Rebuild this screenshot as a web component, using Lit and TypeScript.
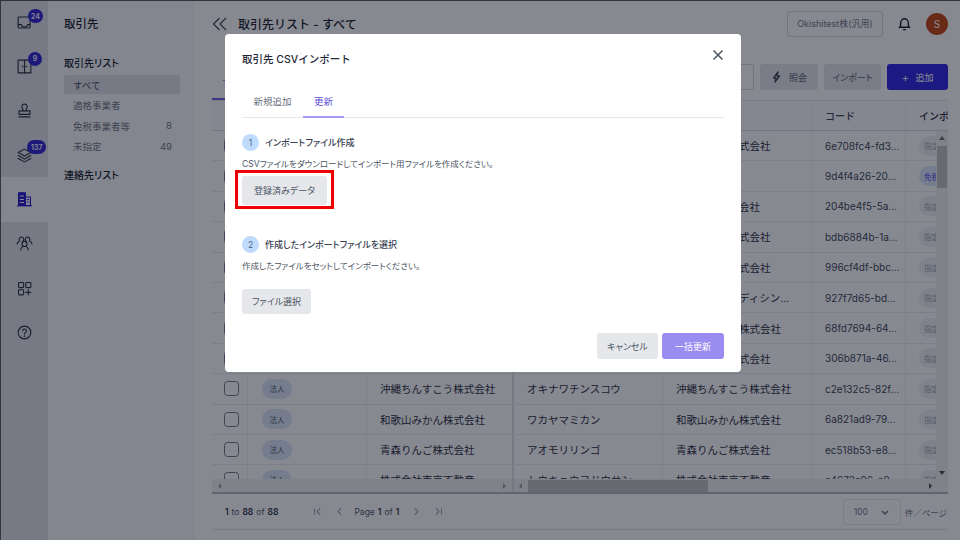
import { LitElement, html, css, svg } from "lit";
import { customElement } from "lit/decorators.js";

const rows: [string, string, string, string, boolean?][] = [
  ["熊本すいか株式会社", "クマモトスイカ", "熊本すいか株式会社", "6e708fc4-fd3..."],
  ["山田太郎", "ヤマダタロウ", "山田太郎", "9d4f4a26-20...", true],
  ["北海道メロン会社", "ホッカイドウメロン", "北海道メロン会社", "204be4f5-5a..."],
  ["長野ぶどう株式会社", "ナガノブドウ", "長野ぶどう株式会社", "bdb6884b-1a..."],
  ["静岡おちゃ株式会社", "シズオカオチャ", "静岡おちゃ株式会社", "996cf4df-bbc..."],
  ["株式会社東メディシン", "トウメディシン", "株式会社東メディシン...", "927f7d65-bd..."],
  ["鹿児島さつま株式会社", "カゴシマサツマ", "鹿児島さつま株式会社", "68fd7694-64..."],
  ["栃木いちご株式会社", "トチギイチゴ", "栃木いちご株式会社", "306b871a-46..."],
  ["沖縄ちんすこう株式会社", "オキナワチンスコウ", "沖縄ちんすこう株式会社", "c2e132c5-82f..."],
  ["和歌山みかん株式会社", "ワカヤマミカン", "和歌山みかん株式会社", "6a821ad9-79..."],
  ["青森りんご株式会社", "アオモリリンゴ", "青森りんご株式会社", "ec518b53-e8..."],
  ["株式会社東京不動産", "トウキョウフドウサン", "株式会社東京不動産", "a4673a96-e9..."],
];

const rail = [
  { badge: "24", icon: svg`<path d="M16.500 12.500V3.500h-13a1 1 0 0 0-1 1v11a1 1 0 0 0 1 1h12a1 1 0 0 0 1-1z"/><path d="M2.500 12.500h4a3.500 2.500 0 0 0 7 0h3"/>` },
  { badge: "9", icon: svg`<rect x="2.500" y="2.500" width="15" height="15"/><path d="M10 2.500v15"/><path d="M7.800 10h.01M12.200 10h.01" stroke-width="2"/>` },
  { icon: svg`<path d="M8 10.500V8.200A3.200 3.200 0 1 1 12 8.200V10.500"/><path d="M3.500 10.500h13v4h-13zM3.500 17.500h13"/>` },
  { badge: "137", icon: svg`<path d="M10 2.500 17.500 6.500 10 10.500 2.500 6.500z"/><path d="M2.500 10 10 14 17.500 10"/><path d="M2.500 13.500 10 17.500 17.500 13.500"/>` },
  { active: true, icon: svg`<rect x="3" y="2" width="8" height="15" fill="#1e12c8" stroke="#1e12c8"/><rect x="11" y="7" width="6" height="10" stroke="#1e12c8"/><path d="M5 6h4M5 10h4M5 13.500h4" stroke="#fff" stroke-width="1.200"/><path d="M13 10h2M13 13h2M1.500 17.500h17" stroke="#1e12c8" stroke-width="1"/>` },
  { icon: svg`<circle cx="10" cy="10.500" r="3"/><path d="M5.500 17.500c.4-2.600 1.800-3.700 2.800-4.300M14.500 17.500c-.4-2.600-1.800-3.700-2.800-4.300"/><path d="M7.600 7.600A2.700 2.700 0 1 0 4 6.400M12.400 7.600A2.700 2.700 0 1 1 16 6.400"/><path d="M1.200 10.500c.3-1.500 1.200-2.600 2.800-3.100M18.800 10.500c-.3-1.500-1.200-2.600-2.800-3.100"/>` },
  { icon: svg`<rect x="3" y="3" width="6" height="6" rx="1"/><rect x="11.500" y="3" width="6" height="6" rx="1"/><rect x="3" y="11.500" width="6" height="6" rx="1"/><path d="M14.500 11.500v6M11.500 14.500h6"/>` },
  { icon: svg`<circle cx="10" cy="10" r="7.500"/><path d="M7.800 8a2.200 2.200 0 1 1 3.400 1.900c-.8.500-1.200 1-1.200 1.900"/><path d="M10 14.200h.01" stroke-width="2"/>` },
];

@customElement("app-root")
export class AppRoot extends LitElement {
  static styles = css`
    :host {
      display: block;
      width: 960px;
      height: 540px;
      overflow: hidden;
      position: relative;
      font-family: Inter, "Noto Sans CJK JP", sans-serif;
      color: #1f2937;
      background: #fff;
    }
    * { box-sizing: border-box; }
    .page { display: flex; height: 540px; border-top: 1px solid #555; border-left: 1px solid #555; }
    .rail { width: 47px; flex: none; background: #dfe1e6; }
    .rail-item { height: 44.300px; display: flex; align-items: center; justify-content: center; position: relative; }
    .rail-item:first-child { height: 43.500px; }
    .rail-item.active { background: #f8f9fa; }
    .rail-item svg { width: 17px; height: 17px; fill: none; stroke: #1f2937; stroke-width: 1.300; stroke-linecap: round; stroke-linejoin: round; }
    .badge { position: absolute; top: 7px; left: 27px; min-width: 14px; height: 14px; padding: 0 3px; border-radius: 7px; background: #2a1fd0; color: #fff; font-size: 7px; font-weight: 600; display: flex; align-items: center; justify-content: center; }
    .rail-item:nth-child(4) .badge { top: 7px; padding: 0 4px; left: 26px; }
    .rail-item:first-child .badge { top: 8px; }
    .side { width: 146px; flex: none; background: #f8f9fa; border-right: 1px solid #eef0f2; padding: 15px 13px 0 16px; }
    .side-title { font-size: 11.500px; font-weight: 500; line-height: 17px; color: #111827; }
    .side-group { font-size: 10px; font-weight: 500; line-height: 15px; color: #111827; font-feature-settings: "palt"; }
    .side-group.first { margin-top: 23px; }
    .side-list { margin-top: 4px; margin-bottom: 12px; display: flex; flex-direction: column; gap: 1.500px; }
    .side-item { height: 19px; padding: 0 8px 0 9px; display: flex; justify-content: space-between; align-items: center; font-size: 9.500px; color: #6b7280; border-radius: 2px; }
    .side-item.sel { background: #dfe1e6; color: #374151; }
    .main { flex: 1; min-width: 0; padding: 0 12px 0 18px; display: flex; flex-direction: column; background: #fff; }
    .head { height: 45px; display: flex; align-items: center; gap: 9px; flex: none; }
    .chev { width: 16px; height: 16px; margin-right: 1px; fill: none; stroke: #374151; stroke-width: 1.200; }
    .crumb { font-size: 12px; font-weight: 500; color: #111827; flex: 1; }
    .org { width: 96px; height: 26px; border: 1px solid #d1d5db; border-radius: 3px; font-size: 9px; color: #6b7280; display: flex; align-items: center; justify-content: center; margin-right: 5px; white-space: nowrap; }
    .bell { width: 15px; height: 15px; fill: none; stroke: #111827; stroke-width: 1.500; margin-right: 5px; }
    .avatar { width: 22px; height: 22px; border-radius: 50%; background: #c2410c; color: #fff; font-size: 10px; display: flex; align-items: center; justify-content: center; }
    .tools { height: 54px; flex: none; display: flex; justify-content: flex-end; gap: 6px; padding-top: 18px; }
    .subtab { width: 30px; height: 36px; margin-right: auto; padding: 12px 0 0 10px; border-bottom: 2px solid #6d5fe0; color: #6d5fe0; font-size: 9px; white-space: nowrap; }
    .tool { height: 26px; border-radius: 3px; background: #e5e7eb; font-size: 9px; color: #4b5563; display: flex; align-items: center; justify-content: center; gap: 6px; font-feature-settings: "palt"; }
    .tool svg { width: 12px; height: 12px; fill: none; stroke: #374151; stroke-width: 1.300; stroke-linejoin: round; }
    .tool.a { width: 58px; }
    .tool.b { width: 57px; }
    .tool.c { width: 61px; background: #2a1fe0; color: #fff; }
    .tool.c span:first-child { font-size: 12px; font-weight: 300; }
    .tool.o { width: 30px; background: #fff; border: 1px solid #d1d5db; }
    .table { flex: none; height: 394px; position: relative; overflow: hidden; border-top: 1px solid #e5e7eb; }
    .tr { display: flex; height: 30.400px; border-bottom: 1px solid #e9eaee; font-size: 10.500px; color: #1f2937; }
    .tr.th { height: 30px; background: #f9fafb; font-weight: 500; border-bottom-color: #d7d9de; font-size: 10px; }
    .td { flex: none; display: flex; align-items: center; padding: 0 13px; border-right: 1px solid #eceef0; overflow: hidden; white-space: nowrap; }
    .td:last-child { border-right: 0; padding-right: 0; }
    .c1 { width: 36px; padding: 0 0 0 12px; }
    .c2 { width: 119px; padding-left: 14px; }
    .c3 { width: 147px; border-right: 2px solid #dcdee2; }
    .c4, .c5 { width: 149px; }
    .c6 { width: 94px; color: #374151; font-size: 10px; }
    .c7 { width: 42px; padding-left: 13px; }
    .check { width: 15px; height: 15px; border: 1px solid #6b7280; border-radius: 3.500px; background: #fff; }
    .pill { height: 20px; width: 30px; flex: none; border-radius: 10px; background: #dbe4f8; color: #4b5563; font-size: 7.500px; display: flex; align-items: center; justify-content: center; }
    .pill.g { width: 40px; background: #f0f1f3; justify-content: flex-start; padding-left: 5px; color: #9ca3af; }
    .pill.b { width: 40px; background: #dbe8ff; justify-content: flex-start; padding-left: 5px; color: #4f46e5; }
    .vbar { position: absolute; right: 0; top: 30px; width: 12px; bottom: 14px; background: #f1f1f1; display: flex; flex-direction: column; align-items: center; }
    .thumb-v { width: 10px; height: 42px; margin-top: 15px; background: #c1c1c1; }
    .arrow-u { position: absolute; top: 5px; width: 0; height: 0; border: 3px solid transparent; border-top: 0; border-bottom: 4px solid #666; }
    .arrow-d { position: absolute; bottom: 5px; width: 0; height: 0; border: 3px solid transparent; border-bottom: 0; border-top: 4px solid #444; }
    .hbar { position: absolute; left: 0; right: 0; bottom: 0; height: 15px; background: #f1f1f1; border-bottom: 2px solid #b4b6bb; display: flex; align-items: center; }
    .hleft { width: 302px; flex: none; height: 100%; border-right: 2px solid #dcdee2; display: flex; align-items: center; justify-content: space-between; padding: 0 6px; }
    .hthumb { width: 180px; flex: none; height: 12px; margin-left: 6px; background: #c1c1c1; }
    .al { flex: none; width: 0; height: 0; border: 3px solid transparent; border-left: 0; border-right: 3px solid #999; }
    .ar { flex: none; width: 0; height: 0; border: 3px solid transparent; border-right: 0; border-left: 3px solid #999; }
    .ar.end { margin-left: auto; margin-right: 16px; border-left-color: #444; }
    .al.mid { margin-left: 5px; }
    .pager { height: 36px; flex: none; border-bottom: 1px solid #e0e2e6; display: flex; align-items: center; padding: 0 1px 0 13px; font-size: 8.500px; color: #4b5563; }
    .pager b { font-weight: 600; color: #1f2937; margin: 0 3px; }
    .count b:first-child { margin-left: 0; }
    .nav { display: flex; align-items: center; gap: 10px; margin-left: 32px; font-size: 8.500px; }
    .nav svg { width: 9px; height: 9px; fill: none; stroke: #9ca3af; stroke-width: 1.100; flex: none; }
    .nav svg.far { margin-right: 3px; }
    .nav svg.far2 { margin-left: 3px; }
    .size { margin-left: auto; width: 58px; height: 26px; border: 1px solid #e5e7eb; border-radius: 3px; display: flex; align-items: center; justify-content: space-between; padding: 0 10px; font-size: 8.500px; color: #6b7280; }
    .size svg { width: 10px; height: 10px; fill: none; stroke: #6b7280; stroke-width: 1.500; }
    .per { margin-left: 4px; font-size: 8.500px; color: #6b7280; }
    .overlay { position: absolute; inset: 0; background: rgba(15, 20, 35, 0.5); display: flex; justify-content: center; align-items: flex-start; padding: 34px 0 0 6px; }
    .modal { width: 516px; height: 338px; background: #fff; border-radius: 4px; padding: 16px 17px 13px; display: flex; flex-direction: column; position: relative; }
    .m-title { height: 20px; line-height: 20px; font-size: 10.500px; font-weight: 500; color: #1f2937; }
    .close { position: absolute; top: 15px; right: 17px; width: 12px; height: 12px; fill: none; stroke: #4b5563; stroke-width: 1.500; }
    .tabs { display: flex; margin-top: 19px; height: 29px; border-bottom: 1px solid #e5e7eb; font-size: 9.500px; color: #6b7280; }
    .tab { width: 61px; padding-top: 5px; text-align: center; }
    .tab.on { width: 41px; color: #5b4fd8; border-bottom: 2px solid #a29bf0; height: 29px; }
    .step { display: flex; align-items: center; gap: 6px; height: 17px; font-size: 9px; font-weight: 500; color: #374151; margin-top: 16px; font-feature-settings: "palt"; }
    .num { width: 17px; height: 17px; border-radius: 50%; background: #bfdbfe; color: #4b6382; font-size: 8.500px; font-weight: 400; display: flex; align-items: center; justify-content: center; }
    .desc { font-size: 8.500px; color: #4b5563; margin-top: 6px; line-height: 15px; font-feature-settings: "palt"; }
    .btn { align-self: flex-start; border-radius: 3px; background: #e5e7eb; font-size: 9px; color: #4b5563; display: flex; align-items: center; justify-content: center; font-feature-settings: "palt"; }
    .btn.hl { width: 85px; height: 29px; margin-top: 4px; position: relative; }
    .btn.hl::after { content: ""; position: absolute; inset: -6px -7px -4px -7px; border: 3.500px solid #ee0000; }
    .step.two { margin-top: 31px; }
    .desc.two { margin-top: 6px; }
    .btn.file { width: 69px; height: 25px; margin-top: 15px; }
    .foot { margin-top: auto; display: flex; justify-content: flex-end; gap: 4px; }
    .foot .cancel { width: 61px; height: 26px; }
    .foot .go { width: 62px; height: 26px; background: #9b8cf2; color: #fff; }
  `;

  render() {
    return html`
      <div class="page">
        <nav class="rail">
          ${rail.map(r => html`
            <div class="rail-item ${r.active ? "active" : ""}">
              <svg viewBox="0 0 20 20">${r.icon}</svg>
              ${r.badge ? html`<span class="badge">${r.badge}</span>` : ""}
            </div>`)}
        </nav>
        <aside class="side">
          <div class="side-title">取引先</div>
          <div class="side-group first">取引先リスト</div>
          <div class="side-list">
            <div class="side-item sel"><span>すべて</span></div>
            <div class="side-item"><span>適格事業者</span></div>
            <div class="side-item"><span>免税事業者等</span><span>8</span></div>
            <div class="side-item"><span>未指定</span><span>49</span></div>
          </div>
          <div class="side-group">連絡先リスト</div>
        </aside>
        <main class="main">
          <div class="head">
            <svg class="chev" viewBox="0 0 16 16"><path d="M7.500 2 1.500 8l6 6M14 2 8 8l6 6"/></svg>
            <div class="crumb">取引先リスト - すべて</div>
            <div class="org">Okishitest株(汎用)</div>
            <svg class="bell" viewBox="0 0 16 16"><path d="M3 12c1-1 1-2 1-5a4 4 0 0 1 8 0c0 3 0 4 1 5zM6.500 14.500h3"/></svg>
            <div class="avatar">S</div>
          </div>
          <div class="tools">
            <div class="subtab">すべて</div>
            <div class="tool o"></div>
            <div class="tool a"><svg viewBox="0 0 12 12"><path d="M7 1 2.500 7H5l-1 4 4.500-6H6z"/></svg><span>照会</span></div>
            <div class="tool b">インポート</div>
            <div class="tool c"><span>+</span><span>追加</span></div>
          </div>
          <div class="table">
            <div class="tr th">
              <div class="td c1"></div><div class="td c2">種別</div><div class="td c3">取引先名</div><div class="td c4">カナ</div><div class="td c5">正式名称</div><div class="td c6">コード</div><div class="td c7">インボ</div>
            </div>
            ${rows.map(r => html`
              <div class="tr">
                <div class="td c1"><span class="check"></span></div>
                <div class="td c2"><span class="pill">法人</span></div>
                <div class="td c3">${r[0]}</div>
                <div class="td c4">${r[1]}</div>
                <div class="td c5">${r[2]}</div>
                <div class="td c6">${r[3]}</div>
                <div class="td c7"><span class="pill ${r[4] ? "b" : "g"}">${r[4] ? "免税" : "指定"}</span></div>
              </div>`)}
            <div class="vbar"><span class="arrow-u"></span><div class="thumb-v"></div><span class="arrow-d"></span></div>
            <div class="hbar">
              <div class="hleft"><span class="al"></span><span class="ar"></span></div>
              <span class="al mid"></span><div class="hthumb"></div><span class="ar end"></span>
            </div>
          </div>
          <div class="pager">
            <span class="count"><b>1</b>to<b>88</b>of<b>88</b></span>
            <div class="nav">
              <svg class="far" viewBox="0 0 9 9"><path d="M1.500 1.500v6M7 1.500 4 4.500l3 3"/></svg>
              <svg viewBox="0 0 9 9"><path d="M6 1.500 3 4.500l3 3"/></svg>
              <span>Page<b>1</b>of<b>1</b></span>
              <svg viewBox="0 0 9 9"><path d="M3 1.500 6 4.500l-3 3"/></svg>
              <svg class="far2" viewBox="0 0 9 9"><path d="M7.500 1.500v6M2 1.500 5 4.500l-3 3"/></svg>
            </div>
            <div class="size"><span>100</span><svg viewBox="0 0 10 10"><path d="M2 4l3 3 3-3"/></svg></div>
            <span class="per">件／ページ</span>
          </div>
        </main>
      </div>
      <div class="overlay">
        <div class="modal">
          <div class="m-title">取引先 CSVインポート</div>
          <svg class="close" viewBox="0 0 12 12"><path d="M1.500 1.500l9 9M10.500 1.500l-9 9"/></svg>
          <div class="tabs"><div class="tab">新規追加</div><div class="tab on">更新</div></div>
          <div class="step"><span class="num">1</span>インポートファイル作成</div>
          <div class="desc">CSVファイルをダウンロードしてインポート用ファイルを作成ください。</div>
          <div class="btn hl">登録済みデータ</div>
          <div class="step two"><span class="num">2</span>作成したインポートファイルを選択</div>
          <div class="desc two">作成したファイルをセットしてインポートください。</div>
          <div class="btn file">ファイル選択</div>
          <div class="foot"><div class="btn cancel">キャンセル</div><div class="btn go">一括更新</div></div>
        </div>
      </div>
    `;
  }
}
